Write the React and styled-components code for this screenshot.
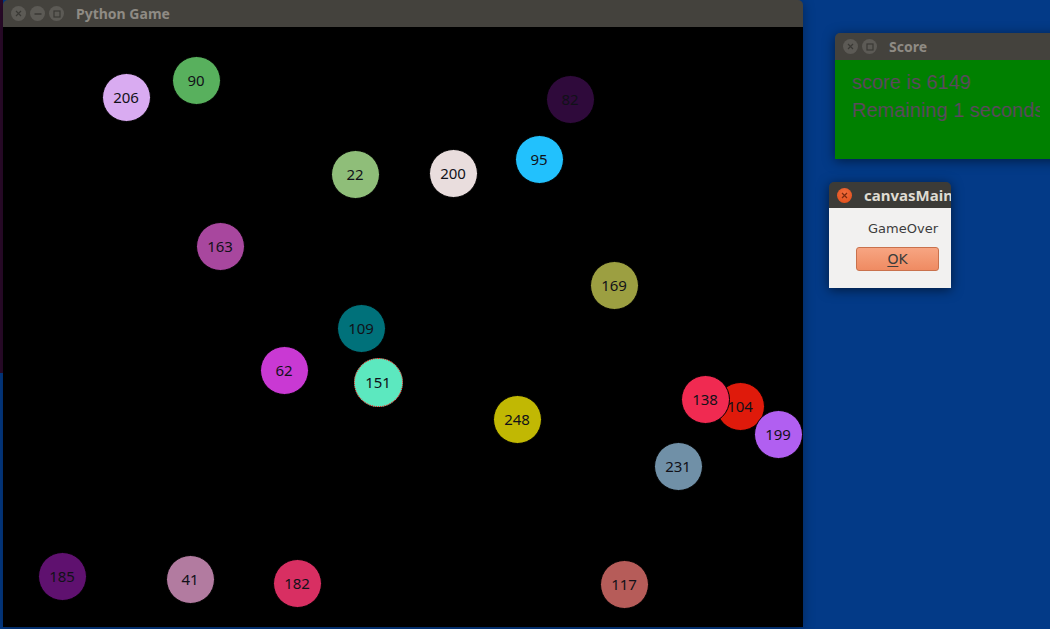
import React from 'react';
import styled, { createGlobalStyle } from 'styled-components';

const balls = [
  { n: 206, x: 126, y: 97, c: '#d9abf1' },
  { n: 90, x: 196, y: 80, c: '#58b05d' },
  { n: 82, x: 570, y: 99, c: '#2f0a3b' },
  { n: 22, x: 355, y: 174, c: '#8fbe79' },
  { n: 200, x: 453, y: 173, c: '#e9dddd' },
  { n: 95, x: 539, y: 159, c: '#22c1fd' },
  { n: 163, x: 220, y: 246, c: '#a8479e' },
  { n: 169, x: 614, y: 285, c: '#9c9f41' },
  { n: 109, x: 361, y: 328, c: '#00717a' },
  { n: 62, x: 284, y: 370, c: '#c939d3' },
  { n: 151, x: 378, y: 382, c: '#5ce8bf', selected: true },
  { n: 248, x: 517, y: 419, c: '#c1b803' },
  { n: 104, x: 740, y: 406, c: '#df1a0b' },
  { n: 138, x: 705, y: 399, c: '#f02a51' },
  { n: 199, x: 778, y: 434, c: '#b15ff1' },
  { n: 231, x: 678, y: 466, c: '#7090a7' },
  { n: 185, x: 62, y: 576, c: '#5f116f' },
  { n: 41, x: 190, y: 579, c: '#b27ba0' },
  { n: 182, x: 297, y: 583, c: '#d82f62' },
  { n: 117, x: 624, y: 584, c: '#b65c59' },
];

const GlobalStyle = createGlobalStyle`
  body {
    margin: 0;
    background: #033a87;
    font-family: 'Noto Sans', 'DejaVu Sans', sans-serif;
  }
`;

const Desktop = styled.div`
  position: relative;
  width: 1050px;
  height: 629px;
  overflow: hidden;
  background: #033a87;
`;

const BackWindow = styled.div`
  position: absolute;
  left: 0;
  top: 0;
  width: 3px;
  height: 373px;
  background: #2c0b2b;
`;

const Window = styled.div`
  position: absolute;
  left: ${p => p.$x}px;
  top: ${p => p.$y}px;
  width: ${p => p.$w}px;
  display: flex;
  flex-direction: column;
  box-shadow: 0 2px 12px rgba(0, 0, 0, ${p => p.$shadow || 0.35});
  border-radius: 5px 5px 0 0;
`;

const TitleBar = styled.div`
  height: ${p => p.$h || 27}px;
  display: flex;
  align-items: center;
  padding-left: 8px;
  background: ${p => p.$active ? '#3c3b37' : '#44423d'};
  border-radius: 5px 5px 0 0;
  overflow: hidden;
  white-space: nowrap;
`;

const Buttons = styled.div`
  display: flex;
  gap: 4px;
  margin-right: ${p => p.$gap || 12}px;
`;

const CtrlButton = styled.div`
  width: 15px;
  height: 15px;
  flex-shrink: 0;
  border-radius: 50%;
  background: ${p => p.$danger ? 'radial-gradient(circle at 50% 35%, #f26d3d, #df4b16)' : '#5c5a55'};
  display: flex;
  align-items: center;
  justify-content: center;
  svg { display: block; }
`;

const Title = styled.span`
  font-family: 'Noto Sans', sans-serif;
  font-weight: bold;
  font-size: ${p => p.$size || 14}px;
  color: ${p => p.$active ? '#dfdbd2' : '#8f8b84'};
`;

const Canvas = styled.div`
  position: relative;
  height: 600px;
  background: #000;
`;

const Ball = styled.div`
  position: absolute;
  width: 49px;
  height: 49px;
  margin: -24.5px 0 0 -24.5px;
  box-sizing: border-box;
  border-radius: 50%;
  border: 1px ${p => p.$selected ? 'dotted #ff1a1a' : 'solid #000'};
  display: flex;
  align-items: center;
  justify-content: center;
  font-family: 'Noto Sans', sans-serif;
  font-size: 15px;
  color: #111118;
`;

const ScoreBody = styled.div`
  height: 99px;
  background: #008000;
  padding: 8px 0 0 17px;
  box-sizing: border-box;
`;

const ScoreText = styled.div`
  width: 188px;
  overflow: hidden;
  white-space: nowrap;
  font-family: 'Liberation Sans', Arial, sans-serif;
  font-size: 20px;
  line-height: 28px;
  color: #5a4a5c;
`;

const DialogBody = styled.div`
  height: 80px;
  background: #f2f1f0;
  display: flex;
  flex-direction: column;
  align-items: flex-end;
  padding: 13px 12px 0 0;
  box-sizing: border-box;
  gap: 11px;
`;

const Message = styled.div`
  font-family: 'DejaVu Sans', sans-serif;
  font-size: 13px;
  color: #3c3c3c;
  padding-right: 1px;
`;

const OkButton = styled.button`
  width: 83px;
  height: 24px;
  border: 1px solid #c9714c;
  border-radius: 3px;
  background: linear-gradient(#f7a582, #ef8b62);
  font-family: 'DejaVu Sans', sans-serif;
  font-size: 14px;
  color: #3c3c3c;
  padding: 0;
  u { text-decoration-thickness: 1px; text-underline-offset: 2px; }
`;

const CloseIcon = ({ color }) => (
  <svg width="7" height="7" viewBox="0 0 7 7">
    <path d="M1 1 L6 6 M6 1 L1 6" stroke={color} strokeWidth="1.2" />
  </svg>
);

const MinIcon = () => (
  <svg width="8" height="8" viewBox="0 0 8 8">
    <path d="M0.5 4 H7.5" stroke="#3a3935" strokeWidth="1.4" />
  </svg>
);

const MaxIcon = () => (
  <svg width="8" height="8" viewBox="0 0 8 8">
    <rect x="1" y="1" width="6" height="6" fill="none" stroke="#3a3935" strokeWidth="1.2" />
  </svg>
);

export default function App() {
  return (
    <Desktop>
      <GlobalStyle />
      <BackWindow />

      <Window $x={3} $y={0} $w={800}>
        <TitleBar>
          <Buttons $gap={12}>
            <CtrlButton><CloseIcon color="#3a3935" /></CtrlButton>
            <CtrlButton><MinIcon /></CtrlButton>
            <CtrlButton><MaxIcon /></CtrlButton>
          </Buttons>
          <Title>Python Game</Title>
        </TitleBar>
        <Canvas>
          {balls.map(b => (
            <Ball
              key={b.n}
              $selected={b.selected}
              style={{ left: b.x - 3, top: b.y - 27, background: b.c }}
            >
              {b.n}
            </Ball>
          ))}
        </Canvas>
      </Window>

      <Window $x={835} $y={33} $w={230} $shadow={0.5}>
        <TitleBar>
          <Buttons $gap={12}>
            <CtrlButton><CloseIcon color="#3a3935" /></CtrlButton>
            <CtrlButton><MaxIcon /></CtrlButton>
          </Buttons>
          <Title>Score</Title>
        </TitleBar>
        <ScoreBody>
          <ScoreText>score is 6149</ScoreText>
          <ScoreText>Remaining 1 seconds</ScoreText>
        </ScoreBody>
      </Window>

      <Window $x={829} $y={182} $w={122} $shadow={0.55}>
        <TitleBar $h={26} $active>
          <Buttons $gap={12}>
            <CtrlButton $danger><CloseIcon color="#7c2a0e" /></CtrlButton>
          </Buttons>
          <Title $active $size={15}>canvasMain</Title>
        </TitleBar>
        <DialogBody>
          <Message>GameOver</Message>
          <OkButton><u>O</u>K</OkButton>
        </DialogBody>
      </Window>
    </Desktop>
  );
}
